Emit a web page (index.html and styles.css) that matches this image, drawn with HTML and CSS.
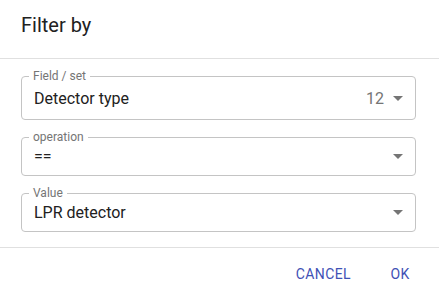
FILE: index.html
```html
<!DOCTYPE html>
<html lang="en">
<head>
  <meta charset="UTF-8">
  <meta name="viewport" content="width=device-width, initial-scale=1.0">
  <title>Filter by</title>
  <link rel="stylesheet" href="styles.css">
</head>
<body>
  <div class="dialog">
    <h2 class="dialog-title">Filter by</h2>
    <div class="dialog-content">
      <fieldset class="field field-first">
        <legend>Field / set</legend>
        <div class="select">
          <span class="select-value">Detector type</span>
          <span class="select-count">12</span>
          <svg class="arrow" viewBox="0 3 24 19" width="24" height="19"><path d="M7 10l5 5 5-5z"/></svg>
        </div>
      </fieldset>
      <fieldset class="field">
        <legend>operation</legend>
        <div class="select">
          <span class="select-value">==</span>
          <svg class="arrow" viewBox="0 3 24 19" width="24" height="19"><path d="M7 10l5 5 5-5z"/></svg>
        </div>
      </fieldset>
      <fieldset class="field">
        <legend>Value</legend>
        <div class="select">
          <span class="select-value">LPR detector</span>
          <svg class="arrow" viewBox="0 3 24 19" width="24" height="19"><path d="M7 10l5 5 5-5z"/></svg>
        </div>
      </fieldset>
    </div>
    <div class="dialog-actions">
      <button class="btn">Cancel</button>
      <button class="btn">Ok</button>
    </div>
  </div>
</body>
</html>
```

FILE: styles.css
```css
body {
  margin: 0;
  background: #ffffff;
  font-family: Roboto, "Liberation Sans", sans-serif;
  color: #212121;
}

.dialog {
  width: 439px;
  height: 300px;
  display: flex;
  flex-direction: column;
}

.dialog-title {
  margin: 0;
  padding: 13px 21px 21px;
  font-size: 20px;
  font-weight: 400;
  line-height: 24px;
  border-bottom: 1px solid #e0e0e0;
}

.dialog-content {
  padding: 10px 23px 15px 21px;
  display: flex;
  flex-direction: column;
  gap: 10px;
  border-bottom: 1px solid #e0e0e0;
}

.field {
  margin: 0;
  padding: 3px 5px 9px 12px;
  border: 1px solid #c4c4c4;
  border-radius: 4px;
  min-width: 0;
}

.field-first {
  padding-top: 6px;
  padding-bottom: 11px;
}

.field legend {
  margin-left: -5px;
  padding: 0 4px;
  font-size: 12px;
  line-height: 14px;
  color: #757575;
}

.select {
  display: flex;
  align-items: flex-start;
  font-size: 16px;
  line-height: 19px;
}

.select-value {
  flex: 1;
}

.select-count {
  color: #757575;
  margin-right: 2px;
}

.arrow {
  fill: #757575;
  display: block;
}

.dialog-actions {
  display: flex;
  justify-content: flex-end;
  gap: 9px;
  padding: 8px 7px 8px 8px;
}

.btn {
  min-width: 64px;
  height: 36px;
  padding: 6px 8px;
  border: none;
  background: none;
  font-family: Roboto, "Liberation Sans", sans-serif;
  font-size: 14px;
  font-weight: 400;
  letter-spacing: 0.4px;
  text-transform: uppercase;
  color: #3f51b5;
  cursor: pointer;
}
```
